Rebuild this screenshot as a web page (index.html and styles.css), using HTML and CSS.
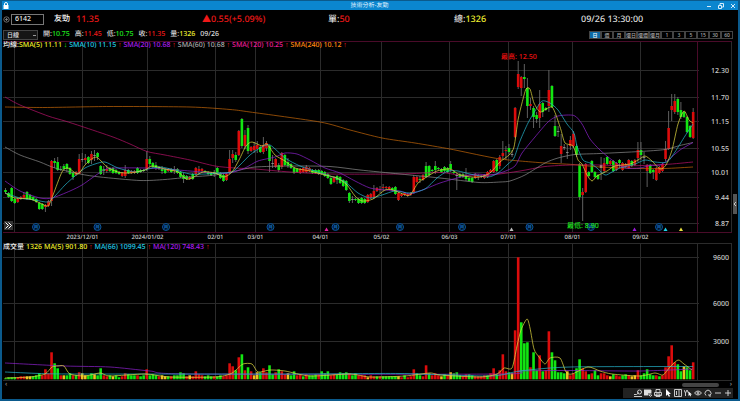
FILE: index.html
```html
<!DOCTYPE html>
<html lang="zh-Hant">
<head>
    <meta charset="UTF-8">
    <meta name="viewport" content="width=device-width, initial-scale=1.0">
    <title>技術分析-友勁</title>
    <link rel="stylesheet" href="styles.css">
</head>
<body>
    <div class="window">
        <header class="titlebar">
            <svg class="lock" viewBox="0 0 6 7"><path d="M1.5 3V2a1.5 1.5 0 0 1 3 0v1" fill="none" stroke="#fff"/><path d="M.5 3h5v4h-5z" fill="#fff"/></svg>
            <h1>技術分析-友勁</h1>
            <div class="window-buttons">
                <button aria-label="縮小"><svg viewBox="0 0 6 6"><path d="M1 3.5h4"/></svg></button>
                <button aria-label="還原"><svg viewBox="0 0 6 6"><path d="M.5 2.5h3v3h-3zM2 2V.5h3.500V4H4"/></svg></button>
                <button aria-label="關閉"><svg viewBox="0 0 6 6"><path d="M1 1l4 4M5 1L1 5"/></svg></button>
            </div>
        </header>

        <!-- Quote -->
        <div class="quote">
            <div class="symbol">
                <svg viewBox="0 0 7 7"><circle cx="3.500" cy="3.500" r="2.700"/><path d="M3.500 2v3M2 3.500h3"/></svg>
                <input type="text" value="6142" aria-label="股票代號">
            </div>
            <span class="name">友勁</span>
            <span class="up">11.35</span>
            <span class="up">▲0.55(+5.09%)</span>
            <span>單:<span class="up">50</span></span>
            <span>總:<span class="volume">1326</span></span>
            <span>09/26 13:30:00</span>
        </div>

        <!-- OHLC and period -->
        <div class="ohlc">
            <select aria-label="週期"><option>日線</option></select>
            <span>開:<span class="down">10.75</span></span>
            <span>高:<span class="up">11.45</span></span>
            <span>低:<span class="down">10.75</span></span>
            <span>收:<span class="up">11.35</span></span>
            <span>量:<span class="volume">1326</span></span>
            <span>09/26</span>
            <div class="periods">
                <button class="active">日</button><button>週</button><button>月</button><button>還日</button><button>還週</button><button>還月</button><button>1</button><button>3</button><button>5</button><button>15</button><button>30</button><button>60</button>
            </div>
        </div>

        <!-- Price chart -->
        <section class="panel">
            <div class="legend">
                <span class="ma5"><span class="label">均線:</span>SMA(5) 11.11 <i class="down">↓</i></span>
                <span class="ma10">SMA(10) 11.15 <i>↑</i></span>
                <span class="ma20">SMA(20) 10.68 <i>↑</i></span>
                <span class="ma60">SMA(60) 10.68 <i>↑</i></span>
                <span class="ma120">SMA(120) 10.25 <i>↑</i></span>
                <span class="ma240">SMA(240) 10.12 <i>↑</i></span>
            </div>
            <svg class="chart" id="priceChart" viewBox="3 41 734 202"></svg>
            <button class="expand" aria-label="展開"><svg viewBox="0 0 9 9"><path d="M1.500 1.500l3 3-3 3M4.500 1.500l3 3-3 3"/></svg></button>
            <button class="side-handle" aria-label="側欄"><svg viewBox="0 0 4 6"><path d="M3 1L1 3l2 2"/></svg></button>
        </section>

        <!-- Volume chart -->
        <section class="panel">
            <div class="legend">
                <span class="label">成交量</span>
                <span class="ma5">1326</span>
                <span class="ma5">MA(5) 901.80 <i>↑</i></span>
                <span class="ma10">MA(66) 1099.45 <i>↑</i></span>
                <span class="ma20">MA(120) 748.43 <i>↑</i></span>
            </div>
            <svg class="chart" id="volumeChart" viewBox="3 243 734 139"></svg>
        </section>

        <div class="scrollbar"><span>‹</span><div class="thumb"></div><span>›</span></div>

        <footer class="toolbar">
            <button aria-label="空白"><svg viewBox="0 0 8 8"></svg></button>
            <button aria-label="畫線"><svg viewBox="0 0 8 8"><path d="M0 7.500h8M0 5.500h2.500L5 3.500"/><circle cx="5.500" cy="3" r="2"/></svg></button>
            <button aria-label="視窗"><svg viewBox="0 0 8 8"><path d="M0 1h7v5H0z" fill="#ddd"/><path d="M4 5h4M4 7h4" stroke="#222"/><path d="M5 6l1.500 1.500L8 6"/></svg></button>
            <button aria-label="列印"><svg viewBox="0 0 8 8"><path d="M2 3V.5h4V3M.5 3.500h7v3h-7zM2 5h4v2.500H2z"/></svg></button>
            <button aria-label="游標"><svg viewBox="0 0 8 8"><path d="M2 0v7l1.500-1.500L5 8l1-1-1.200-2H7z" fill="#fff" stroke="none"/></svg></button>
            <button aria-label="資訊"><svg viewBox="0 0 8 8"><path d="M.5.5h7v7h-7zM2.500 2v4M4 2h2M4 4h2M4 6h2"/></svg></button>
            <button aria-label="指標"><svg viewBox="0 0 8 8"><path d="M0 1l1.500 3L3 1M1.500 4v3M3 1l1.500 3"/><path d="M4.500 2.500v4.500l1-1 1 1.500.5-.5-.5-1.500H8z" fill="#fff" stroke="none"/></svg></button>
            <button aria-label="顯示"><svg viewBox="0 0 8 8"><path d="M.5 4Q4 0 7.500 4 4 8 .5 4z"/><circle cx="4" cy="4" r="1"/></svg></button>
            <button aria-label="重設"><svg viewBox="0 0 8 8"><path d="M2 6.500A3 3 0 1 1 6 6.500M5 5v2h2"/></svg></button>
            <button aria-label="縮小圖"><svg viewBox="0 0 8 8"><path d="M1 4h6"/></svg></button>
            <button aria-label="放大圖"><svg viewBox="0 0 8 8"><path d="M1 4h6M4 1v6"/></svg></button>
        </footer>
    </div>

    <script src="chart.js"></script>
</body>
</html>
```

FILE: styles.css
```css
* {
    box-sizing: border-box;
}
body {
    margin: 0;
    background: #000;
    color: #ddd;
    font-family: "Noto Sans", "Noto Sans CJK TC", sans-serif;
    font-size: 7px;
    font-weight: 500;
    text-rendering: geometricPrecision;
}
button, input, select {
    font: inherit;
    color: inherit;
    margin: 0;
    padding: 0;
    border: none;
    background: none;
}
svg {
    display: block;
}
i {
    color: #f01818;
    font-family: "Liberation Sans", sans-serif;
    font-style: normal;
    font-weight: 700;
}
.window {
    display: flex;
    flex-direction: column;
    min-height: 100vh;
    border: solid #0b5a8c;
    border-width: 1px 2px 2px 2px;
    padding: 0 1px;
}
.titlebar {
    display: grid;
    grid-template-columns: 1fr auto 1fr;
    align-items: center;
    height: 9px;
    margin: 0 -1px;
    padding: 0 2px 0 1px;
    background: #0b86cf;
    color: #e4f4ff;
}
.titlebar h1 {
    margin: 0;
    font-size: 6px;
    font-weight: 400;
    line-height: 9px;
}
.lock {
    width: 6px;
    height: 7px;
}
.window-buttons {
    display: flex;
    justify-content: flex-end;
    gap: 6px;
}
.window-buttons svg {
    width: 6px;
    height: 6px;
    fill: none;
    stroke: #d5ecfa;
}
.quote {
    display: grid;
    grid-template-columns: 51px 22px 126fr 126fr 126fr 127fr 156fr;
    align-items: center;
    height: 18px;
    font-size: 9px;
    line-height: 18px;
    white-space: nowrap;
}
.symbol {
    display: flex;
    align-items: center;
    gap: 1px;
}
.symbol svg {
    width: 7px;
    height: 7px;
    fill: none;
    stroke: #888;
    stroke-width: 0.8;
}
.symbol input {
    width: 33px;
    height: 11px;
    padding: 0 3px;
    border: 1px solid #777;
    color: #eee;
    font-size: 7px;
}
.name {
    color: #fff;
    font-size: 8px;
}
.up {
    color: #f01818;
}
.down, .legend .down {
    color: #1fe81f;
}
.volume {
    color: #f0f030;
}
.ohlc {
    display: flex;
    align-items: center;
    gap: 5px;
    height: 13px;
    padding-right: 4px;
    line-height: 13px;
    white-space: nowrap;
}
.ohlc select {
    appearance: none;
    width: 35px;
    height: 10px;
    padding: 0 3px;
    border: 1px solid #444;
    background: linear-gradient(#999, #999) 29px 4px / 3px 1px no-repeat #151515;
    font-size: 6px;
    line-height: 8px;
}
.periods {
    display: flex;
    margin-left: auto;
}
.periods button {
    width: 12px;
    height: 8px;
    outline: 1px solid #444;
    outline-offset: -1px;
    color: #aaa;
    font-size: 5px;
    line-height: 8px;
}
.periods .active {
    background: #0d6aa5;
    color: #fff;
}
.panel {
    position: relative;
}
.chart {
    width: 100%;
    height: auto;
}
.legend {
    position: absolute;
    top: 0;
    left: 0;
    display: flex;
    gap: 2px;
    line-height: 9px;
    white-space: nowrap;
}
.label {
    color: #eee;
}
.ma5 {
    color: #f0f02a;
}
.ma10 {
    color: #20cce8;
}
.ma20 {
    color: #a81cee;
}
.ma60 {
    color: #aaa;
}
.ma120 {
    color: #e81c98;
}
.ma240 {
    color: #ff8610;
}
.expand {
    position: absolute;
    left: 1px;
    bottom: 13px;
    width: 9px;
    height: 9px;
    background: #333;
}
.expand svg, .side-handle svg {
    fill: none;
    stroke: #fff;
}
.side-handle {
    position: absolute;
    right: 0;
    bottom: 29px;
    width: 4px;
    height: 20px;
    background: #555;
}
.side-handle svg {
    width: 4px;
    height: 6px;
    stroke-width: 0.7;
}

/* Chart drawing */
.grid {
    stroke: #2b2b2b;
}
.frame {
    stroke: #4a0b29;
}
.axis {
    fill: #ccc;
    font-size: 7px;
    text-anchor: end;
}
.date {
    fill: #ccc;
    font-size: 6px;
    text-anchor: middle;
}
.high {
    fill: #f01010;
    font-size: 7px;
}
.low {
    fill: #1fe81f;
    font-size: 7px;
}
.wick {
    stroke: #777;
    stroke-width: 0.8;
}
.line {
    fill: none;
    stroke-width: 0.9;
    opacity: 0.8;
}
.month circle {
    fill: #001020;
    stroke: #0b559a;
}
.month text {
    fill: #1471c4;
    font-size: 5px;
    text-anchor: middle;
}

.scrollbar {
    display: flex;
    align-items: center;
    height: 6px;
    padding: 0 5px 0 2px;
    color: #888;
    line-height: 6px;
}
.thumb {
    width: 37px;
    height: 4px;
    margin-left: auto;
    margin-right: 11px;
    border-radius: 2px;
    background: #444;
}
.toolbar {
    display: flex;
    align-self: flex-end;
    margin-right: 4px;
    background: #222;
}
.toolbar button {
    display: grid;
    place-items: center;
    width: 10px;
    height: 10px;
}
.toolbar svg {
    width: 8px;
    height: 8px;
    fill: none;
    stroke: #ddd;
    stroke-width: 0.9;
}
```

FILE: chart.js
```js
const START_X = 5.5;
const STEP = 3.07;
const BASELINE = 379.3;
const COLORS = { r: '#dc0c0c', g: '#12e612', y: '#f0c020', w: '#999' };

// color, body top, body bottom, optional wick top and wick bottom
const candles = `g190,192,188,193 g193,197 g188,201 g199,203 r199,202 r197,199 r195,198,192,199 g192,199 g195,199 g197,200
g199,202 g203,209 g204,209 r205,207,204,212 r201,206 r161,201,160,206 g161,163,158,168 g162,170,157,171 g169,170,166,171 g166,169,164,170
g164,169,163,172 g168,174 g173,177,172,180 r172,175 r159,174,154,174 w159,159,153,162 r158,160,154,164 g157,163 r154,160,151,164 w155,155,150,161
g153,157,152,160 g166,174 g169,171,166,175 r169,171,165,173 g168,171 g168,173 g170,173 g172,174 r173,176 r170,176,165,178
g170,173 r171,173 r171,173 g168,173 g170,172 g170,171 r159,169,151,171 g159,164,156,167 g163,167 g165,168,162,170
g167,169 g169,171,166,174 g169,173 r169,171 g169,172 r169,171,166,174 g169,173 g172,177 g175,179,173,183 g176,179
r177,179 g174,179 r168,174 r169,171,166,174 r169,171 g171,172 g172,174 g173,175 g172,174,170,177 g168,174
g173,178 g175,181 r174,180 r159,173,150,174 r154,158,150,163 g155,160,152,162 r131,155 g119,146,118,148 r135,146,130,149 g128,151,125,154
r147,151 r146,150,142,153 r145,149,141,153 g147,152 r145,152,137,154 r143,148,141,151 g146,161,145,172 w163,163,155,168 r159,167 g165,170,163,172
r153,167,152,169 g155,165 g162,166,158,168 g164,168 g168,173 g169,172 r169,173 r168,172 r167,172,165,173 r168,171
g170,173 g170,173 g170,174 g171,174 g172,176 g174,178 g178,184 r177,182 g176,180,175,184 g177,183
g180,186 g181,190 g193,201,192,203 w199,199,196,203 g199,200 g199,203 g198,203 g199,203 r195,202 r194,198
r191,197,185,199 r188,191 r189,190,186,193 r187,188,184,191 r187,188 r187,189 g188,190 g187,194 r193,200 r194,196
r193,195 r194,196 r193,195 r177,192,175,194 r177,182 g179,180,176,183 r175,180 g166,177,162,178 g166,175 g170,171
g166,170,161,174 g168,169 g169,172 g167,171 g168,172 g164,169,161,172 g172,173 w175,176,173,190 g174,177 g174,177
g176,179,168,181 g178,181 g178,182 r174,178 r176,177,174,180 r176,177 r175,178 r172,177 r170,172 r161,172
g160,171 r157,166,155,169 r153,156,141,159 r150,151,146,160 g148,152,144,154 w154,154,150,157 r108,137 r74,87,61,89 r77,88,76,96 g77,79,64,88
g88,106,78,118 r104,106,98,110 g108,117,106,128 g115,119,112,123 r104,118,90,128 g103,112,102,117 g108,110 r90,106,70,112 g86,107,85,108 g126,136,115,137
w131,131,126,137 r146,154,134,163 w147,147,144,150 w152,152,145,159 r140,146,136,150 r134,146,131,148 g146,155,144,157 g164,197,163,200 r192,195,188,221 r164,192
g172,176 g161,172 g172,177 g175,179 w165,168,157,180 r163,171,158,173 g157,164 r161,164 g161,171 r163,170
g160,163,159,168 r163,170 r164,167 r160,168 g161,166 r160,165 r150,158,142,162 g150,155,142,160 w157,157,152,164 r165,171,164,187
g165,173 g170,172,169,179 r168,180 r167,173 r164,171 r149,159,141,161 r128,149,111,150 r106,110,94,121 r101,112,94,114 g99,112,97,115
g110,117,102,119 g112,117 g117,132 g126,137 r112,138,108,139`;

const volumes = `g1 g2 g2 g2 r2 r3 r3 y3 y3 g3 g4 g6 r4 r10 r6 r27 g16 g11 r4 y4 g4 g6 r4 g4 r7 y6 y4 g4 g6 y5
g4 g11 r4 r3 g4 y3 g4 g2 r3 r6 g5 g4 g4 r4 g3 g4 r10 g4 g5 g4 r3 y4 y3 g3 r3 g4 g4 g7 g6 r3
y4 r3 r8 r5 r4 g3 g4 g3 r3 g3 g4 r3 r4 r16 r13 g9 r22 g25 r9 g12 r8 y4 y7 g7 r11 r7 g14 g5 r7 g10
r8 r5 y6 g4 g8 r4 r5 g3 r5 g4 g4 g5 r5 g8 g6 g8 r4 r5 g5 g7 g6 g7 r6 g4 g6 r4 r4 r4 y2 r4
r3 g3 r3 g3 g3 g3 g3 g3 y3 r2 g4 r2 r3 r10 g6 g4 r3 r14 g6 r4 r6 r4 y3 g5 r4 y7 g6 g7 g4 r3
r5 g5 g4 r3 r3 r3 r4 g4 r6 r11 g5 r9 r25 r8 g7 y6 r49 r122 g57 g36 g37 r12 g27 g9 r24 g8 r9 r48 g27 g19
g7 g7 g6 y8 r4 r6 g11 g20 r11 r8 g5 r6 g9 g4 r6 r6 r4 y3 g5 r4 r3 g4 g5 r4 y3 y4 r9 g4 g6 g10
g5 g4 r4 g3 r4 r12 r23 r34 r17 g15 g8 y13 g12 g9 r17`;

const priceLines = {
    '#c06408': '5,107 45,107.5 110,106.5 190,107 230,109.5 250,112 320,122 350,130 382,138 415,143 450,149 479,155 500,159 520,161 545,163 573,164.5 600,167 640,168.5 665,168.5 693,167',
    '#b51268': '5,97 20,105 48,116 65,121 82,126.5 113,137 130,144 147,151.5 165,155 190,160 215,166 235,168 255,169 290,172 330,174 400,174 440,172.5 460,175 490,175 520,171 545,166.5 572,165 600,165 625,166 665,164.5 693,162',
    '#888888': '5,147 20,155 40,162 55,168 80,174 100,177 140,180.5 165,179.5 190,177 215,175 240,170 255,167 290,166 330,166.5 360,170 400,174 440,178 479,182.5 500,182 510,181 525,175 545,163 558,158 575,154.5 600,153.5 640,151.5 665,149.5 680,145.5 693,142.5',
    '#8b22cc': '5,181 20,191 40,198 52,198 70,191 82,185 92,178 104,170 115,168 145,168 165,169 190,171 215,173 230,173 245,168 258,161 275,157 285,153 297,154 310,160 325,168 340,173 355,181 370,188 385,190 400,191 410,194 425,189 440,183 457,178 475,174 490,175 503,172 515,166 522,153 535,137 548,122 558,116 574,115.5 582,124 590,139 600,150 612,160 625,168 640,168 650,165.5 660,165 668,160 680,150 693,142.5',
    '#26b4cc': '5,193 20,198 35,200 48,202 55,196 65,185 75,176 85,168 95,164 105,162 118,168 135,172 148,169 160,167 175,170 190,174 205,174 220,173 232,172 240,165 250,155 260,148 270,145 285,158 300,166 315,171 330,176 345,182 358,193 370,198 382,195 395,191 410,193 425,189 437,178 448,171 458,171 470,174 488,177 498,173 508,164 514,158 520,141 528,123 535,111 542,101 550,103 558,110 567,124 574,133 577,146 583,160 590,163 597,168 605,175 612,172 620,168 635,164 645,160 655,162 667,162 675,152 685,136 693,124',
    '#e0d840': '5,193 15,198 30,199 40,203 48,206 53,195 62,172 68,168 78,174 85,165 93,158 98,158 107,167 118,172 130,173 145,170 152,166 165,169 178,172 186,179 192,178 203,172 215,173 224,177 232,172 239,160 246,146 252,142 262,146 267,144 275,155 285,161 295,168 310,171 325,175 337,178 347,185 355,196 362,201 373,199 385,190 393,190 403,194 410,195 418,183 425,178 437,171 450,169 460,175 472,177 480,177 490,173 500,162 509,155 514,147 518,120 522,103 526,89 530,89 534,103 540,112 546,109 552,107 556,115 561,130 565,143 573,146 578,160 582,164 587,175 592,181 597,176 607,171 615,166 630,164 638,160 645,156 652,161 660,169 666,165 672,150 678,124 684,111 689,120 693,123'
};

const volumeLines = {
    '#8b22cc': '5,363 65,366 110,367 150,371 190,374 500,374 520,371 570,370.5 640,371 693,369',
    '#26b4cc': '5,372 40,373.5 80,374 300,374 400,373.5 490,376 520,371 570,367 693,366.5',
    '#e0d840': '5,378 30,377 45,374 52,367 58,366 64,366 70,374 85,376 100,373 110,376 145,374 170,377 215,377 230,374 236,370 243,364 252,364 258,372 270,370 285,371 310,376 350,374 370,377 405,376 430,373 440,375 480,377 497,374 504,368 512,368 517,346 521,330 527,319 530,328 534,349 539,357 545,364 550,358 560,358 566,372 572,374 588,367 600,371 612,374 640,376 655,373 663,375 670,367 678,360 684,364 692,370'
};

const months = { 14.5: '', 82.5: '2023/12/01', 147.5: '2024/01/02', 215.5: '02/01', 255.5: '03/01', 320.5: '04/01', 381.5: '05/02', 449.5: '06/03', 508.5: '07/01', 572.5: '08/01', 640.5: '09/02' };
const prices = { '12.30': 70.5, '11.70': 97.5, '11.15': 121.5, '10.55': 148.5, '10.01': 172.5, '9.44': 197.5, '8.87': 223.5 };
const volumeTicks = { '9600': 257.5, '6000': 303.5, '3000': 341.5 };

function line(x1, y1, x2, y2, cls) {
    return `<line class="${cls}" x1="${x1}" y1="${y1}" x2="${x2}" y2="${y2}"/>`;
}

function text(x, y, value, cls) {
    return `<text class="${cls}" x="${x}" y="${y}">${value}</text>`;
}

// Curve through every point, flat enough not to overshoot
function smooth(points, color) {
    const p = points.split(' ').map(s => s.split(',').map(Number));
    let d = `M${p[0]}`;
    for (let i = 0; i < p.length - 1; i++) {
        const a = p[i - 1] || p[i], b = p[i], c = p[i + 1], e = p[i + 2] || c;
        d += `C${b[0] + (c[0] - a[0]) / 8},${b[1] + (c[1] - a[1]) / 8} ${c[0] - (e[0] - b[0]) / 8},${c[1] - (e[1] - b[1]) / 8} ${c}`;
    }
    return `<path class="line" stroke="${color}" d="${d}"/>`;
}

function drawGrid(top, bottom, ticks) {
    let out = '';
    Object.keys(months).forEach(x => { out += line(x, top, x, bottom, 'grid'); });
    Object.entries(ticks).forEach(([label, y]) => {
        out += line(3, y, 699, y, 'grid') + text(729, y + 2, label, 'axis');
    });
    return out + line(731.5, top, 731.5, bottom, 'grid');
}

function drawPrice() {
    let out = drawGrid(41, 232, prices);
    out += line(3, 41.5, 732, 41.5, 'frame') + line(3, 232.5, 732, 232.5, 'frame') + line(697.5, 41, 697.5, 232, 'frame');
    Object.entries(months).forEach(([x, label]) => { out += text(x, 239, label, 'date'); });

    [36, 97.5, 166, 270.5, 335.5, 400, 462, 529.5, 591, 659].forEach(x => {
        out += `<g class="month"><circle cx="${x}" cy="227" r="3.5"/>${text(x, 229, '月', '')}</g>`;
    });

    candles.split(/\s+/).forEach((item, i) => {
        const x = START_X + i * STEP;
        const [top, bottom, high = top - 1, low = bottom + 1] = item.slice(1).split(',').map(Number);
        out += line(x, high, x, low, 'wick');
        out += `<rect x="${x - 1.3}" y="${top}" width="2.6" height="${Math.max(bottom - top, 0.8)}" fill="${COLORS[item[0]]}"/>`;
    });
    Object.entries(priceLines).forEach(([color, points]) => { out += smooth(points, color); });

    [[326.5, '#e020a0'], [511.5, '#bbb'], [634.5, '#9a18d8'], [665.5, '#20d0e8'], [681, '#e8e040']].forEach(([x, color]) => {
        out += `<path d="M${x} 227.500l2 3.500h-4z" fill="${color}"/>`;
    });
    out += text(501, 59, '最高: 12.50', 'high') + text(567, 228, '最低: 8.90', 'low');
    document.getElementById('priceChart').innerHTML = out;
}

function drawVolume() {
    let out = drawGrid(243, 381, volumeTicks);
    out += line(3, 243.5, 732, 243.5, 'grid') + line(3, 380.5, 732, 380.5, 'grid') + line(697.5, 243, 697.5, 381, 'grid');
    volumes.split(/\s+/).forEach((item, i) => {
        const height = Number(item.slice(1));
        out += `<rect x="${START_X + i * STEP - 1.3}" y="${BASELINE - height}" width="2.6" height="${height}" fill="${COLORS[item[0]]}"/>`;
    });
    Object.entries(volumeLines).forEach(([color, points]) => { out += smooth(points, color); });
    document.getElementById('volumeChart').innerHTML = out;
}

drawPrice();
drawVolume();
```
